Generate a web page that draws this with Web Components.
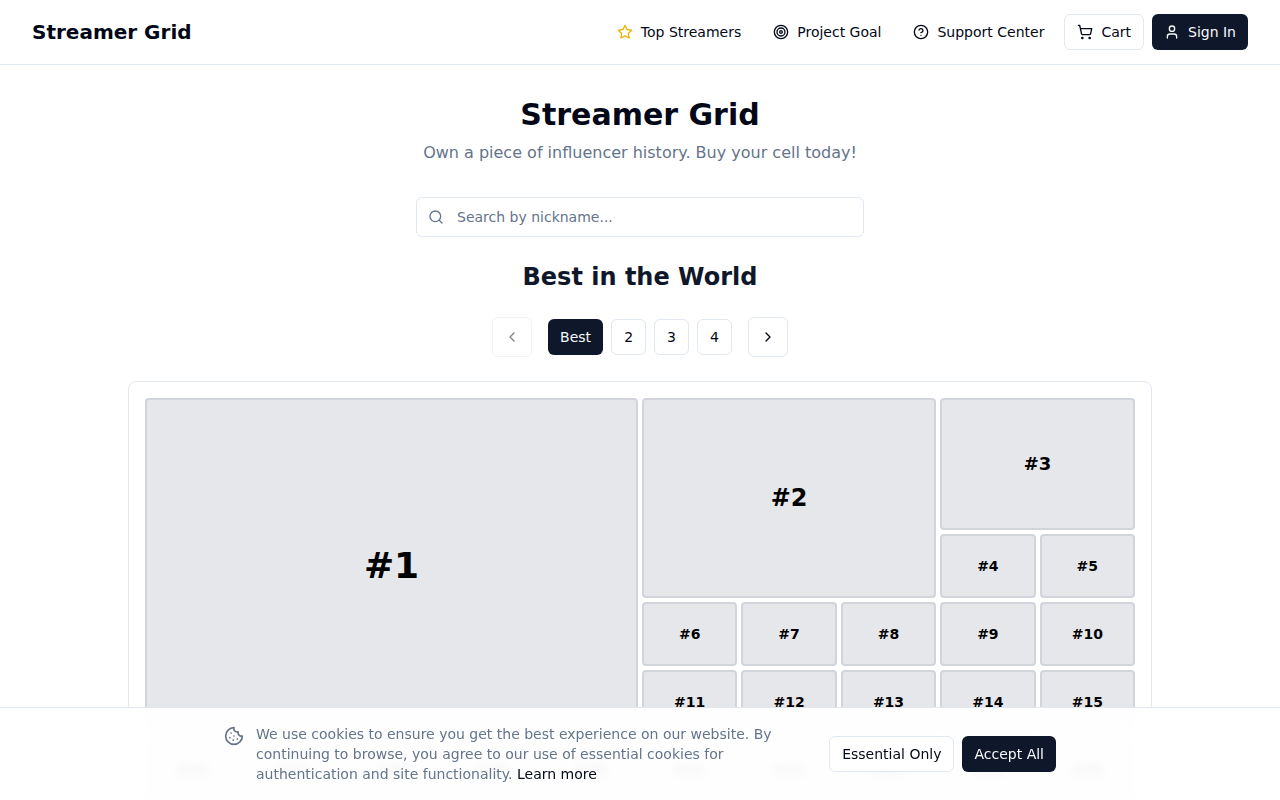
<!DOCTYPE html>
<html lang="en">
<head>
<meta charset="utf-8">
<meta name="viewport" content="width=device-width, initial-scale=1">
<title>Streamer Grid</title>
<style>
  :root {
    --fg: #020817;
    --primary: #0f172a;
    --primary-fg: #f8fafc;
    --muted: #64748b;
    --border: #e2e8f0;
  }
  body {
    margin: 0;
    background: #fff;
    color: var(--fg);
    font: 14px/20px "DejaVu Sans", sans-serif;
  }
</style>
</head>
<body>
<streamer-app></streamer-app>

<script>
const ICONS = {
  star: '<polygon points="12 2 15.09 8.26 22 9.27 17 14.14 18.18 21.02 12 17.77 5.82 21.02 7 14.14 2 9.27 8.91 8.26 12 2"/>',
  target: '<circle cx="12" cy="12" r="10"/><circle cx="12" cy="12" r="6"/><circle cx="12" cy="12" r="2"/>',
  help: '<circle cx="12" cy="12" r="10"/><path d="M9.09 9a3 3 0 0 1 5.83 1c0 2-3 3-3 3"/><path d="M12 17h.01"/>',
  cart: '<circle cx="8" cy="21" r="1"/><circle cx="19" cy="21" r="1"/><path d="M2.05 2.05h2l2.66 12.42a2 2 0 0 0 2 1.58h9.78a2 2 0 0 0 1.95-1.57l1.65-7.43H5.12"/>',
  user: '<path d="M19 21v-2a4 4 0 0 0-4-4H9a4 4 0 0 0-4 4v2"/><circle cx="12" cy="7" r="4"/>',
  search: '<circle cx="11" cy="11" r="8"/><path d="m21 21-4.3-4.3"/>',
  left: '<path d="m15 18-6-6 6-6"/>',
  right: '<path d="m9 18 6-6-6-6"/>',
  cookie: '<path d="M12 2a10 10 0 1 0 10 10 4 4 0 0 1-5-5 4 4 0 0 1-5-5"/><path d="M8.5 8.5v.01"/><path d="M16 15.5v.01"/><path d="M12 12v.01"/><path d="M11 17v.01"/><path d="M7 14v.01"/>'
};

class UiIcon extends HTMLElement {
  connectedCallback() {
    this.attachShadow({ mode: 'open' });
    this.shadowRoot.innerHTML = `
      <style>
        :host { display: block; flex: none; width: 16px; height: 16px; }
        svg { display: block; width: 100%; height: 100%; }
      </style>
      <svg viewBox="0 0 24 24" fill="none" stroke="currentColor" stroke-width="2"
        stroke-linecap="round" stroke-linejoin="round" aria-hidden="true">${ICONS[this.getAttribute('name')]}</svg>
    `;
  }
}
customElements.define('ui-icon', UiIcon);

// Button or link, depending on whether an href is given.
class UiButton extends HTMLElement {
  connectedCallback() {
    const href = this.getAttribute('href');
    const label = this.getAttribute('label');
    const aria = label ? `aria-label="${label}"` : '';
    const disabled = this.hasAttribute('disabled') ? 'disabled' : '';
    const content = '<slot name="icon"></slot><slot></slot>';
    this.attachShadow({ mode: 'open' });
    this.shadowRoot.innerHTML = `
      <style>
        :host { display: block; flex: none; }
        .btn {
          box-sizing: border-box;
          display: flex;
          align-items: center;
          justify-content: center;
          gap: 8px;
          height: 36px;
          padding: 0 12px;
          border: 0;
          border-radius: 6px;
          background: none;
          color: var(--fg);
          font: inherit;
          text-decoration: none;
          white-space: nowrap;
          cursor: pointer;
        }
        :host([variant="outline"]) .btn { border: 1px solid var(--border); background: #fff; }
        :host([variant="primary"]) .btn { background: var(--primary); color: var(--primary-fg); }
        :host([square]) .btn { width: 40px; height: 40px; padding: 0; }
        .btn:disabled { opacity: 0.5; cursor: default; }
      </style>
      ${href
        ? `<a class="btn" href="${href}" ${aria}>${content}</a>`
        : `<button class="btn" type="button" ${aria} ${disabled}>${content}</button>`}
    `;
  }
}
customElements.define('ui-button', UiButton);

class SiteHeader extends HTMLElement {
  connectedCallback() {
    this.attachShadow({ mode: 'open' });
    this.shadowRoot.innerHTML = `
      <style>
        :host { display: block; position: sticky; top: 0; z-index: 1; }
        header {
          display: flex;
          align-items: center;
          justify-content: space-between;
          height: 64px;
          padding: 0 32px;
          border-bottom: 1px solid var(--border);
          background: #fff;
        }
        .logo { color: inherit; font-size: 20px; line-height: 28px; font-weight: 700; text-decoration: none; }
        nav { display: flex; align-items: center; gap: 8px; }
        .star { color: #eab308; }
      </style>
      <header>
        <a class="logo" href="#">Streamer Grid</a>
        <nav>
          <ui-button href="#top"><ui-icon slot="icon" class="star" name="star"></ui-icon>Top Streamers</ui-button>
          <ui-button href="#goal"><ui-icon slot="icon" name="target"></ui-icon>Project Goal</ui-button>
          <ui-button href="#support"><ui-icon slot="icon" name="help"></ui-icon>Support Center</ui-button>
          <ui-button variant="outline"><ui-icon slot="icon" name="cart"></ui-icon>Cart</ui-button>
          <ui-button variant="primary"><ui-icon slot="icon" name="user"></ui-icon>Sign In</ui-button>
        </nav>
      </header>
    `;
  }
}
customElements.define('site-header', SiteHeader);

class NicknameSearch extends HTMLElement {
  connectedCallback() {
    this.attachShadow({ mode: 'open' });
    this.shadowRoot.innerHTML = `
      <style>
        :host { display: block; width: 100%; max-width: 448px; }
        label {
          box-sizing: border-box;
          display: flex;
          align-items: center;
          gap: 13px;
          height: 40px;
          padding: 0 11px;
          border: 1px solid var(--border);
          border-radius: 6px;
          color: var(--muted);
        }
        input {
          flex: 1;
          min-width: 0;
          padding: 0;
          border: 0;
          outline: 0;
          background: none;
          color: var(--fg);
          font: inherit;
        }
        input::placeholder { color: var(--muted); opacity: 1; }
      </style>
      <label for="nickname">
        <ui-icon name="search"></ui-icon>
        <input id="nickname" type="text" aria-label="Search by nickname" placeholder="Search by nickname...">
      </label>
    `;
  }
}
customElements.define('nickname-search', NicknameSearch);

class GridPager extends HTMLElement {
  connectedCallback() {
    this.attachShadow({ mode: 'open' });
    this.shadowRoot.innerHTML = `
      <style>
        :host { display: block; }
        nav { display: flex; align-items: center; gap: 16px; }
        .pages { display: flex; gap: 8px; }
      </style>
      <nav aria-label="Pages">
        <ui-button variant="outline" square disabled label="Previous"><ui-icon name="left"></ui-icon></ui-button>
        <div class="pages">
          <ui-button variant="primary">Best</ui-button>
          <ui-button variant="outline">2</ui-button>
          <ui-button variant="outline">3</ui-button>
          <ui-button variant="outline">4</ui-button>
        </div>
        <ui-button variant="outline" square label="Next"><ui-icon name="right"></ui-icon></ui-button>
      </nav>
    `;
  }
}
customElements.define('grid-pager', GridPager);

class StreamerGrid extends HTMLElement {
  connectedCallback() {
    const count = Number(this.getAttribute('count'));
    let cells = '';
    for (let i = 1; i <= count; i++) {
      cells += `<button type="button" class="cell rank-${i}">#${i}</button>`;
    }
    this.attachShadow({ mode: 'open' });
    this.shadowRoot.innerHTML = `
      <style>
        :host {
          display: block;
          box-sizing: border-box;
          width: 100%;
          padding: 16px;
          border: 1px solid var(--border);
          border-radius: 8px;
        }
        .grid {
          display: grid;
          grid-template-columns: repeat(10, minmax(0, 1fr));
          grid-auto-rows: 64px;
          gap: 4px;
        }
        .cell {
          padding: 0;
          border: 2px solid #d1d5db;
          border-radius: 4px;
          background: #e5e7eb;
          color: #000;
          font: inherit;
          font-weight: 700;
          cursor: pointer;
        }
        .rank-1 { grid-area: span 5 / span 5; font-size: 36px; line-height: 40px; }
        .rank-2 { grid-area: span 3 / span 3; font-size: 24px; line-height: 32px; }
        .rank-3 { grid-area: span 2 / span 2; font-size: 18px; line-height: 28px; }
      </style>
      <div class="grid">${cells}</div>
    `;
  }
}
customElements.define('streamer-grid', StreamerGrid);

class CookieBanner extends HTMLElement {
  connectedCallback() {
    this.attachShadow({ mode: 'open' });
    this.shadowRoot.innerHTML = `
      <style>
        :host {
          display: block;
          position: fixed;
          left: 0;
          right: 0;
          bottom: 0;
          z-index: 2;
          border-top: 1px solid var(--border);
          background: rgba(255, 255, 255, 0.95);
          backdrop-filter: blur(4px);
        }
        .inner {
          display: flex;
          align-items: center;
          gap: 16px;
          max-width: 832px;
          margin: 0 auto;
          padding: 16px 32px;
        }
        .message { display: flex; flex: 1; gap: 12px; color: var(--muted); }
        .message ui-icon { width: 20px; height: 20px; margin-top: 2px; }
        p { margin: 0; }
        a { color: var(--fg); text-decoration: none; }
        .actions { display: flex; gap: 8px; }
      </style>
      <div class="inner">
        <div class="message">
          <ui-icon name="cookie"></ui-icon>
          <p>We use cookies to ensure you get the best experience on our website. By continuing to browse, you agree to our use of essential cookies for authentication and site functionality. <a href="#privacy">Learn more</a></p>
        </div>
        <div class="actions">
          <ui-button variant="outline">Essential Only</ui-button>
          <ui-button variant="primary">Accept All</ui-button>
        </div>
      </div>
    `;
  }
}
customElements.define('cookie-banner', CookieBanner);

class StreamerApp extends HTMLElement {
  connectedCallback() {
    this.attachShadow({ mode: 'open' });
    this.shadowRoot.innerHTML = `
      <style>
        :host { display: block; }
        main {
          display: flex;
          flex-direction: column;
          align-items: center;
          gap: 24px;
          max-width: 1024px;
          margin: 0 auto;
          padding: 32px 16px;
        }
        .intro { margin-bottom: 8px; text-align: center; }
        h1, h2, p { margin: 0; }
        h1 { font-size: 30px; line-height: 36px; }
        h2 { color: var(--primary); font-size: 24px; line-height: 32px; }
        p { margin-top: 8px; color: var(--muted); font-size: 16px; line-height: 24px; }
      </style>
      <site-header></site-header>
      <main>
        <div class="intro">
          <h1>Streamer Grid</h1>
          <p>Own a piece of influencer history. Buy your cell today!</p>
        </div>
        <nickname-search></nickname-search>
        <h2>Best in the World</h2>
        <grid-pager></grid-pager>
        <streamer-grid count="25"></streamer-grid>
      </main>
      <cookie-banner></cookie-banner>
    `;
  }
}
customElements.define('streamer-app', StreamerApp);
</script>
</body>
</html>
